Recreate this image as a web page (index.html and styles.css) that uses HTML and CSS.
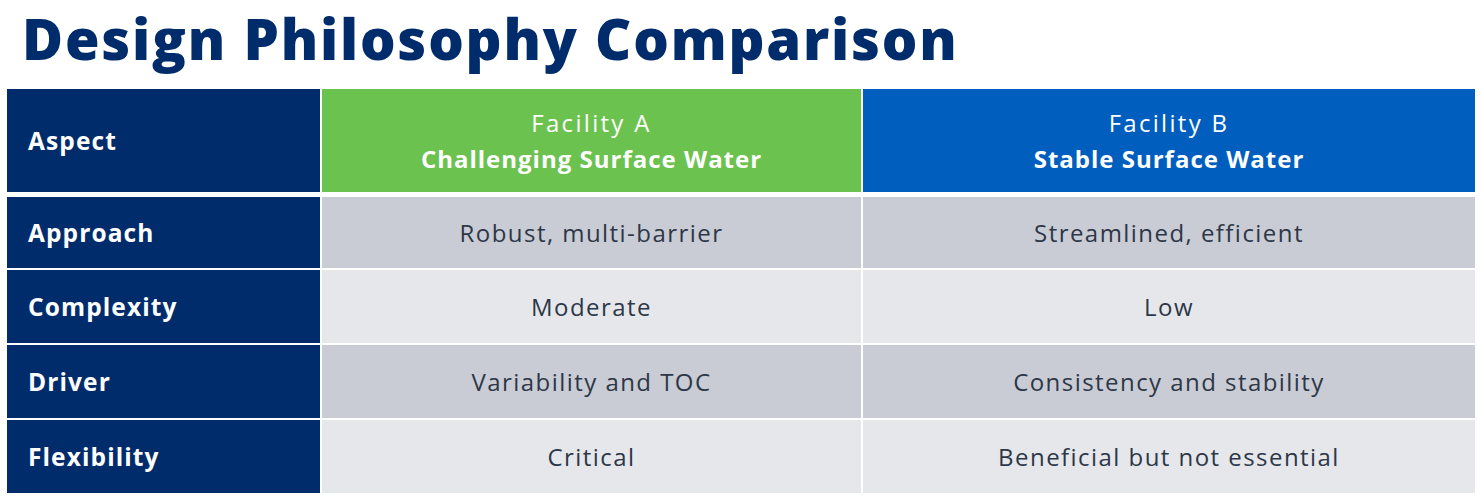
FILE: index.html
```html
<!DOCTYPE html>
<html lang="en">
<head>
<meta charset="utf-8">
<title>Design Philosophy Comparison</title>
<link rel="stylesheet" href="styles.css">
</head>
<body>
<main class="page">
  <h1 class="title">Design Philosophy Comparison</h1>
  <div class="table">
    <div class="cell head aspect">Aspect</div>
    <div class="cell head fac-a"><span class="fac-name">Facility A</span><span class="fac-type">Challenging Surface Water</span></div>
    <div class="cell head fac-b"><span class="fac-name">Facility B</span><span class="fac-type">Stable Surface Water</span></div>
    <div class="spacer"></div>

    <div class="cell label">Approach</div>
    <div class="cell val dark">Robust, multi-barrier</div>
    <div class="cell val dark">Streamlined, efficient</div>

    <div class="cell label">Complexity</div>
    <div class="cell val light">Moderate</div>
    <div class="cell val light">Low</div>

    <div class="cell label">Driver</div>
    <div class="cell val dark">Variability and TOC</div>
    <div class="cell val dark">Consistency and stability</div>

    <div class="cell label">Flexibility</div>
    <div class="cell val light">Critical</div>
    <div class="cell val light">Beneficial but not essential</div>
  </div>
</main>
</body>
</html>
```
FILE: styles.css
```css
* { box-sizing: border-box; }
html, body { margin: 0; padding: 0; background: #ffffff; }
body { font-family: "Open Sans", "Noto Sans", sans-serif; }
.page { padding: 0 7px; }
.title {
  margin: 0;
  padding: 6px 0 0 15px;
  height: 89px;
  font-size: 56px;
  font-weight: 800;
  line-height: 64px;
  color: #002c6c;
  letter-spacing: 1.8px;
}
.table {
  width: 1468px;
  display: grid;
  grid-template-columns: 313px 539px 1fr;
  grid-template-rows: 103px 1px 71px 73px 73px 73px;
  gap: 2px;
}
.spacer { grid-column: 1 / -1; }
.cell {
  display: flex;
  align-items: center;
  font-size: 24px;
}
.head { color: #ffffff; }
.aspect, .label {
  background: #002c6c;
  color: #ffffff;
  font-size: 24.5px;
  font-weight: 700;
  letter-spacing: 1.1px;
  padding-left: 21px;
}
.fac-a, .fac-b {
  flex-direction: column;
  justify-content: center;
  text-align: center;
  font-size: 24px;
  line-height: 36px;
  padding-top: 1px;
}
.fac-a { background: #6cc24f; }
.fac-b { background: #005ebf; }
.fac-name { font-weight: 400; letter-spacing: 2.3px; }
.fac-type { font-weight: 700; letter-spacing: 1px; }
.val {
  justify-content: center;
  color: #2d3748;
  font-weight: 500;
  letter-spacing: 1.45px;
}
.val.dark { background: #c9ccd4; }
.val.light { background: #e6e7eb; }
```
